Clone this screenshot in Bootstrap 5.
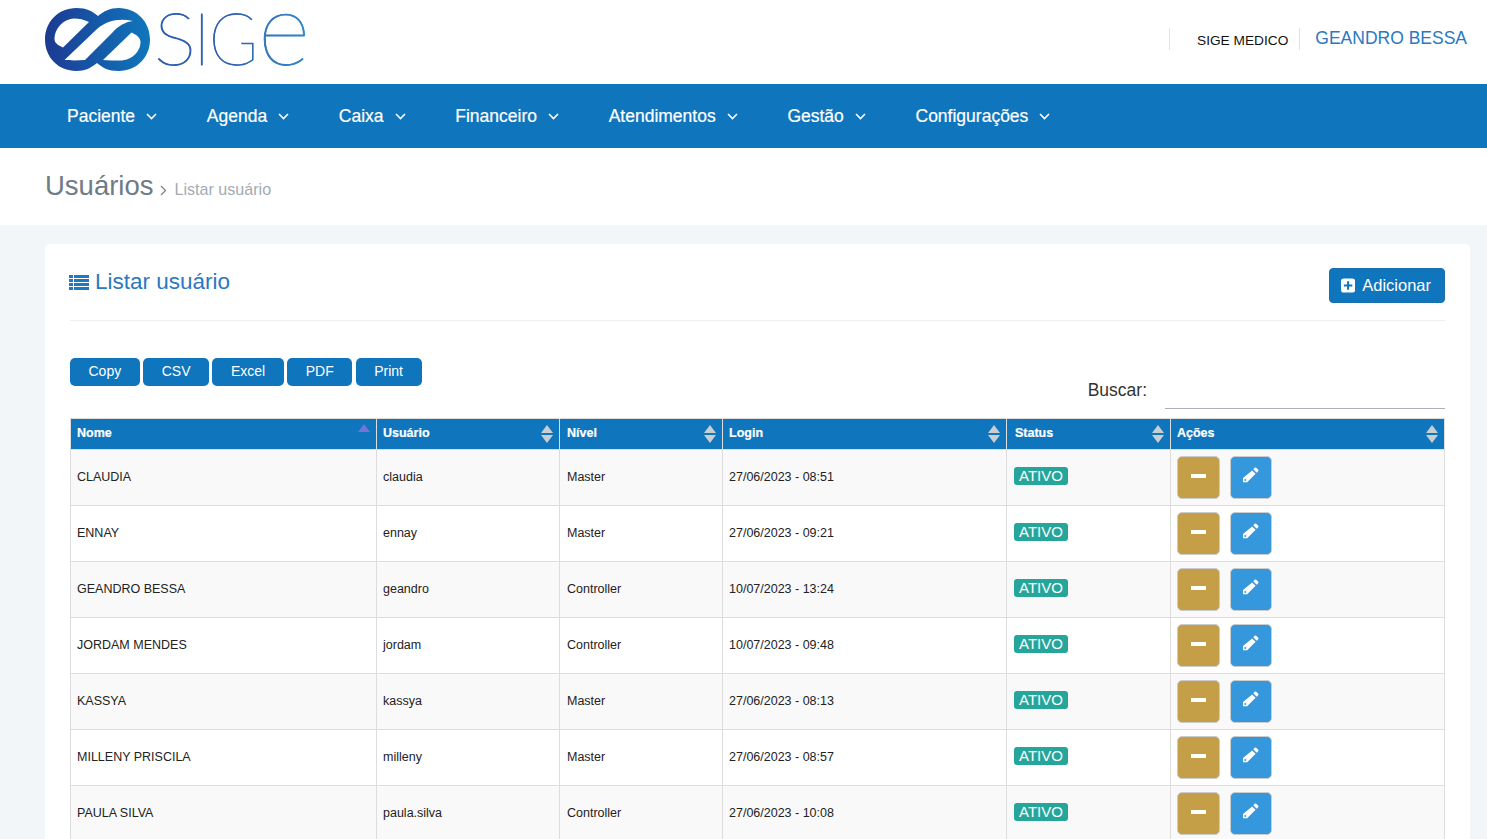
<!DOCTYPE html>
<html lang="pt-BR">
<head>
<meta charset="utf-8">
<title>SIGE - Usuários</title>
<link href="https://cdn.jsdelivr.net/npm/bootstrap@5.3.0/dist/css/bootstrap.min.css" rel="stylesheet">
<style>
html,body{height:100vh;overflow:hidden}
body{font-family:"Liberation Sans",Arial,sans-serif;background:#f2f6f9;color:#222}
.top-head{height:84px;background:#fff;padding:0 20px 0 45px}
.logo-svg{display:block;width:270px;height:72px;margin-top:-4px;overflow:visible}
.logo-word{font-family:Lato,"Liberation Sans",sans-serif;font-weight:100;font-size:72px;stroke:url(#lw);stroke-width:.9px}
.logo-low{font-size:103px}
.head-right{height:22px;margin-top:-7px}
.head-sys{border-left:1px solid #dde4ea;border-right:1px solid #dde4ea;padding:3px 11px 0 27px;font-size:13.7px;color:#111;height:22px}
.head-user{font-size:17.5px;color:#2a78c2;padding-left:15px;line-height:20px}
.main-nav{background:#0f75bc;height:64px;padding:0 0 0 67px}
.navbar-expand .navbar-nav .nav-link.menu-link{color:#fff;font-size:17.5px;padding:0;margin-right:49.7px;gap:11px;-webkit-text-stroke:.2px #fff}
.crumb-bar{height:77px;background:#fff;padding:22px 45px 0;color:#6c7a86}
.crumb-main{font-size:27.5px;line-height:32px;color:#6f7b85}
.crumb-sub{font-size:16.1px;color:#a3abb3}
.crumb-sep{margin:0 8px 0 6px;display:inline-block}
.page-area{padding:19px 17px 0 45px}
.user-card{border:0;border-radius:5px;padding:25px}
.card-top{height:51.5px;border-bottom:1px solid #eceff1;margin-bottom:37px}
.card-ttl{font-size:22.5px;line-height:26px;color:#2a78c2;margin:0 0 0 -1px;font-weight:400;gap:6px}
.btn-add{background:#0f75bc;border:1px solid #1a6fae;color:#fff;font-size:16.5px;height:35px;padding:0 13px 0 11px;border-radius:4px;gap:7px;margin-top:-1px;line-height:1;width:116px}
.tool-row{height:60px}
.btn-tool{background:#0f75bc;color:#fff;font-size:14px;line-height:1;border:0;border-radius:5px;height:28px;padding:0 18.5px 2px}
.tool-gap{gap:3.5px}
.filter-box{font-size:17.5px;color:#333;gap:18px;margin-top:10px}
.filter-cap{padding-top:5px}
.filter-input{width:280px;height:41px;border:0;border-bottom:1px solid #aab0b5;background:transparent;outline:0}
.user-table{table-layout:fixed;width:1374px;margin:0;font-size:12.5px;--bs-table-striped-bg:#f9f9f9;--bs-table-striped-color:#222;--bs-table-color:#222;--bs-border-color:#ddd;color:#222}
.user-table thead th{background:#0f75bc;color:#fff;font-size:12.5px;height:31px;padding:0 6px;vertical-align:middle;border-color:#ddd;--bs-table-color:#fff;--bs-table-bg:#0f75bc;-webkit-text-stroke:.2px #fff}
.user-table tbody td{height:56px;padding:0 6px;vertical-align:middle}
.user-table tbody td.cell-act{padding:6px;vertical-align:top}
.col-a{width:306px}.col-b{width:183px}.col-c{width:163px}.col-d{width:284px}.col-e{width:164px}.col-f{width:274px}
.user-table thead th.cell-st{padding-left:8px}
.user-table tbody td.cell-st{padding-left:7px}
.user-table thead th.cell-nv,.user-table tbody td.cell-nv{padding-left:7px}
.pill-ok{display:inline-block;background:#26a69a;color:#fff;font-size:15px;line-height:18px;height:18px;padding:0 5px;border-radius:3px;margin-top:-2px;vertical-align:middle}
.btn-min,.btn-pen{height:43px;padding:0;border:1px solid #ccc;border-radius:5px;line-height:0}
.btn-min{width:43px;background:#c49f47}
.btn-pen{width:42px;background:#3598dc}
.act-gap{gap:10px}
.min-bar{display:block;width:15px;height:4px;background:#fff;margin:-3px auto 0}
.pen-ico{margin:-4px 0 0 -1px}
</style>
</head>
<body>
<header class="top-head d-flex justify-content-between align-items-center">
  <svg class="logo-svg" viewBox="45 4 270 72" role="img" aria-label="SIGE">
    <defs>
      <linearGradient id="lg" x1="0" x2="1" y1="0" y2="0"><stop offset="0" stop-color="#1c3a92"/><stop offset="1" stop-color="#0f77bd"/></linearGradient>
      <linearGradient id="lw" gradientUnits="userSpaceOnUse" x1="157" x2="307" y1="0" y2="0"><stop offset="0" stop-color="#2a5db0"/><stop offset=".5" stop-color="#2f62b5"/><stop offset="1" stop-color="#2f86c8"/></linearGradient>
    </defs>
    <path fill="url(#lg)" d="M76.500 8C87 8 92 11 98 16C104 11 110 8 118.500 8C137 8 150 22 150 39.500C150 57 137 71 118.500 71C108 71 103 68 97 63C91 68 85 71 76.500 71C58 71 45 57 45 39.500C45 22 58 8 76.500 8Z"/>
    <path fill="#fff" d="M54.500 39C54.500 28 64 19 74 18.500C79 18.500 84 19.500 89 22L63 47.500C57.500 45 54.500 43 54.500 39Z"/>
    <path fill="#fff" d="M64.500 60L97 29C107 20 120 18 133 21C125 22 118 26 112 33L85 60C78 60.500 70 60.500 64.500 60Z"/>
    <path fill="#fff" d="M103 60L131.500 32.500C137 35 140.500 38 140.500 42C140.500 52 131 60.500 120 60.500C114 60.500 108 60.500 103 60Z"/>
    <text class="logo-word" x="154" y="65" fill="url(#lw)" textLength="42" lengthAdjust="spacingAndGlyphs">S</text>
    <text class="logo-word" x="193" y="65" fill="url(#lw)">I</text>
    <text class="logo-word" x="209" y="65" fill="url(#lw)" textLength="49" lengthAdjust="spacingAndGlyphs">G</text>
    <text class="logo-word logo-low" x="258" y="65" fill="url(#lw)" textLength="52" lengthAdjust="spacingAndGlyphs">e</text>
  </svg>
  <div class="head-right d-flex">
    <div class="head-sys">SIGE MEDICO</div>
    <div class="head-user">GEANDRO BESSA</div>
  </div>
</header>

<nav class="main-nav navbar navbar-expand">
  <ul class="navbar-nav">
    <li class="nav-item"><a class="nav-link menu-link d-flex align-items-center" href="#">Paciente <svg width="11" height="7" viewBox="0 0 11 7"><path d="M1 1l4.500 4.500L10 1" fill="none" stroke="#fff" stroke-width="1.600"/></svg></a></li>
    <li class="nav-item"><a class="nav-link menu-link d-flex align-items-center" href="#">Agenda <svg width="11" height="7" viewBox="0 0 11 7"><path d="M1 1l4.500 4.500L10 1" fill="none" stroke="#fff" stroke-width="1.600"/></svg></a></li>
    <li class="nav-item"><a class="nav-link menu-link d-flex align-items-center" href="#">Caixa <svg width="11" height="7" viewBox="0 0 11 7"><path d="M1 1l4.500 4.500L10 1" fill="none" stroke="#fff" stroke-width="1.600"/></svg></a></li>
    <li class="nav-item"><a class="nav-link menu-link d-flex align-items-center" href="#">Financeiro <svg width="11" height="7" viewBox="0 0 11 7"><path d="M1 1l4.500 4.500L10 1" fill="none" stroke="#fff" stroke-width="1.600"/></svg></a></li>
    <li class="nav-item"><a class="nav-link menu-link d-flex align-items-center" href="#">Atendimentos <svg width="11" height="7" viewBox="0 0 11 7"><path d="M1 1l4.500 4.500L10 1" fill="none" stroke="#fff" stroke-width="1.600"/></svg></a></li>
    <li class="nav-item"><a class="nav-link menu-link d-flex align-items-center" href="#">Gestão <svg width="11" height="7" viewBox="0 0 11 7"><path d="M1 1l4.500 4.500L10 1" fill="none" stroke="#fff" stroke-width="1.600"/></svg></a></li>
    <li class="nav-item"><a class="nav-link menu-link d-flex align-items-center" href="#">Configurações <svg width="11" height="7" viewBox="0 0 11 7"><path d="M1 1l4.500 4.500L10 1" fill="none" stroke="#fff" stroke-width="1.600"/></svg></a></li>
  </ul>
</nav>

<div class="crumb-bar">
  <span class="crumb-main">Usuários</span><span class="crumb-sub"><span class="crumb-sep"><svg width="7" height="11" viewBox="0 0 7 11"><path d="M1 1l4.500 4.500L1 10" fill="none" stroke="#78838d" stroke-width="1.300"/></svg></span>Listar usuário</span>
</div>

<main class="page-area">
  <section class="card user-card">
    <div class="card-top d-flex justify-content-between align-items-start">
      <h1 class="card-ttl d-flex align-items-center">
        <svg width="20" height="15" viewBox="0 0 20 15" fill="#1f78c1"><rect y="0" width="4" height="3"/><rect x="5" y="0" width="15" height="3"/><rect y="4" width="4" height="3"/><rect x="5" y="4" width="15" height="3"/><rect y="8" width="4" height="3"/><rect x="5" y="8" width="15" height="3"/><rect y="12" width="4" height="3"/><rect x="5" y="12" width="15" height="3"/></svg>
        Listar usuário
      </h1>
      <a href="#" class="btn btn-add d-inline-flex align-items-center">
        <svg width="15" height="15" viewBox="0 0 15 15"><rect width="15" height="15" rx="3" fill="#fff"/><path d="M7.500 3v9M3 7.500h9" stroke="#0f75bc" stroke-width="2.200"/></svg>
        Adicionar
      </a>
    </div>

    <div class="tool-row d-flex justify-content-between align-items-start">
      <div class="d-flex tool-gap">
        <button class="btn btn-tool" type="button">Copy</button>
        <button class="btn btn-tool" type="button">CSV</button>
        <button class="btn btn-tool" type="button">Excel</button>
        <button class="btn btn-tool" type="button">PDF</button>
        <button class="btn btn-tool" type="button">Print</button>
      </div>
      <label class="filter-box d-flex align-items-center"><span class="filter-cap">Buscar:</span> <input class="filter-input" type="search" aria-label="Buscar"></label>
    </div>

    <table class="table table-bordered table-striped user-table">
      <colgroup><col class="col-a"><col class="col-b"><col class="col-c"><col class="col-d"><col class="col-e"><col class="col-f"></colgroup>
      <thead>
        <tr>
          <th><div class="d-flex justify-content-between align-items-start">Nome <svg width="12" height="18" viewBox="0 0 12 18"><path d="M6 0l6 8H0z" fill="#7474d6"/></svg></div></th>
          <th><div class="d-flex justify-content-between align-items-center">Usuário <svg width="12" height="18" viewBox="0 0 12 18" fill="#c9ced2"><path d="M6 0l6 8H0zM6 18l6-8H0z"/></svg></div></th>
          <th class="cell-nv"><div class="d-flex justify-content-between align-items-center">Nível <svg width="12" height="18" viewBox="0 0 12 18" fill="#c9ced2"><path d="M6 0l6 8H0zM6 18l6-8H0z"/></svg></div></th>
          <th><div class="d-flex justify-content-between align-items-center">Login <svg width="12" height="18" viewBox="0 0 12 18" fill="#c9ced2"><path d="M6 0l6 8H0zM6 18l6-8H0z"/></svg></div></th>
          <th class="cell-st"><div class="d-flex justify-content-between align-items-center">Status <svg width="12" height="18" viewBox="0 0 12 18" fill="#c9ced2"><path d="M6 0l6 8H0zM6 18l6-8H0z"/></svg></div></th>
          <th><div class="d-flex justify-content-between align-items-center">Ações <svg width="12" height="18" viewBox="0 0 12 18" fill="#c9ced2"><path d="M6 0l6 8H0zM6 18l6-8H0z"/></svg></div></th>
        </tr>
      </thead>
      <tbody id="rows"></tbody>
    </table>
  </section>
</main>
<script src="https://cdn.jsdelivr.net/npm/bootstrap@5.3.0/dist/js/bootstrap.bundle.min.js"></script>
<script>
const data=[["CLAUDIA","claudia","Master","27/06/2023 - 08:51"],["ENNAY","ennay","Master","27/06/2023 - 09:21"],["GEANDRO BESSA","geandro","Controller","10/07/2023 - 13:24"],["JORDAM MENDES","jordam","Controller","10/07/2023 - 09:48"],["KASSYA","kassya","Master","27/06/2023 - 08:13"],["MILLENY PRISCILA","milleny","Master","27/06/2023 - 08:57"],["PAULA SILVA","paula.silva","Controller","27/06/2023 - 10:08"]];
document.getElementById('rows').innerHTML=data.map(r=>`<tr><td>${r[0]}</td><td>${r[1]}</td><td class="cell-nv">${r[2]}</td><td>${r[3]}</td><td class="cell-st"><span class="pill-ok">ATIVO</span></td><td class="cell-act"><div class="d-flex act-gap"><button class="btn btn-min" type="button" aria-label="Desativar"><span class="min-bar"></span></button><button class="btn btn-pen" type="button" aria-label="Editar"><svg class="pen-ico" width="17" height="17" viewBox="0 0 17 17"><path fill="#fff" d="M12.800.8a1 1 0 0 1 1.400 0l2 2a1 1 0 0 1 0 1.400l-1.500 1.500-3.400-3.400zM10.200 3.400l3.400 3.400-8.400 8.400H1v-4.200z"/><circle cx="3.300" cy="13" r="1" fill="#3598dc"/></svg></button></div></td></tr>`).join('');
</script>
</body>
</html>
